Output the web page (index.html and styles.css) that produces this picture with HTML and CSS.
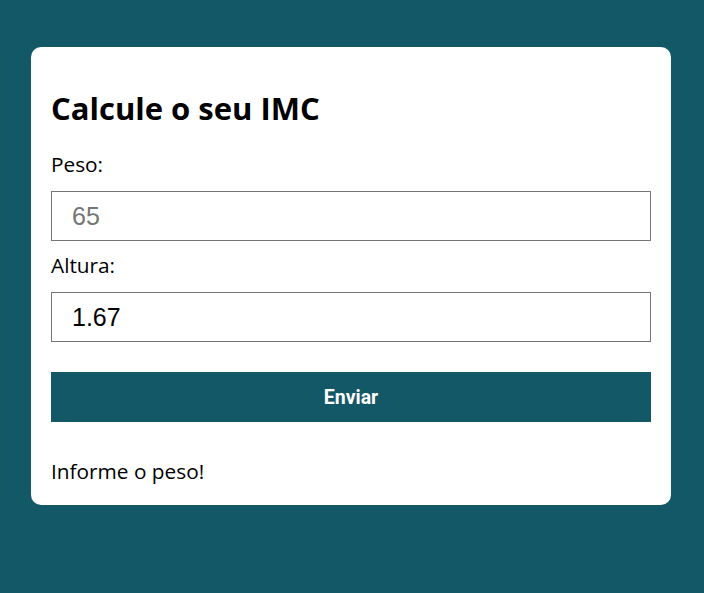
FILE: index.html
```html
<!DOCTYPE html>
<html lang="pt">
<head>
<meta charset="utf-8">
<link rel="stylesheet" href="styles.css">
</head>
<body>
<main class="card">
  <h1 class="title">Calcule o seu IMC</h1>
  <form class="form">
    <label class="label" for="peso">Peso:</label>
    <input class="input" id="peso" type="text" placeholder="65">
    <label class="label" for="altura">Altura:</label>
    <input class="input" id="altura" type="text" value="1.67">
    <button class="button" type="button">Enviar</button>
  </form>
  <p class="message">Informe o peso!</p>
</main>
</body>
</html>
```
FILE: styles.css
```css
html, body {
  margin: 0;
  padding: 0;
}
body {
  background: #135866;
  font-family: "Open Sans", sans-serif;
  padding: 47px 33px 0 31px;
  min-height: 593px;
  box-sizing: border-box;
}
.card {
  background: #fff;
  border-radius: 10px;
  width: 600px;
  padding: 20px;
}
.title {
  font-size: 31px;
  font-weight: 700;
  margin: 20px 0 20px;
  line-height: 43px;
  color: #000;
}
.form {
  display: flex;
  flex-direction: column;
}
.label {
  font-size: 20.8px;
  line-height: 28px;
  margin-bottom: 13px;
  color: #000;
}
.input {
  height: 50px;
  box-sizing: border-box;
  border: 1px solid #767676;
  border-radius: 0;
  padding: 0 20px;
  font-family: "Liberation Sans", Arial, sans-serif;
  font-size: 25px;
  color: #000;
  margin-bottom: 10px;
  outline: none;
}
.input::placeholder {
  color: #757575;
}
.button {
  margin-top: 20px;
  height: 50px;
  border: none;
  background: #135866;
  color: #fff;
  font-family: Roboto, sans-serif;
  font-weight: 700;
  font-size: 19.5px;
  cursor: pointer;
}
.message {
  font-size: 20.8px;
  line-height: 28px;
  margin: 35px 0 0;
  color: #000;
}
```
